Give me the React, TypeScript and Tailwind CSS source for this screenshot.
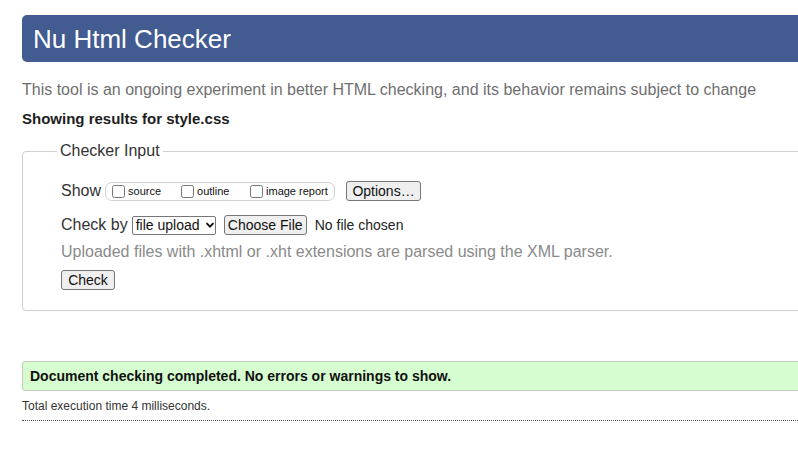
import React from "react";

const Chevron = () => (
  <svg width="10" height="10" viewBox="0 0 10 10" className="ml-[5px]">
    <path d="M1.5 3.2 L5 6.7 L8.5 3.2" fill="none" stroke="#111" strokeWidth="1.9" />
  </svg>
);

const Opt = ({ label }: { label: string }) => (
  <label className="flex items-center">
    <input type="checkbox" className="w-[13px] h-[13px] m-0" readOnly />
    <span className="text-[11px] ml-[3px] text-[#111]">{label}</span>
  </label>
);

const Btn = ({ children, className = "" }: { children: React.ReactNode; className?: string }) => (
  <button
    className={
      "h-[20px] bg-[#efefef] border border-[#767676] rounded-[3px] text-[14px] text-[#111] leading-[18px] " +
      className
    }
  >
    {children}
  </button>
);

export default function App() {
  return (
    <div
      className="w-[798px] h-[463px] overflow-hidden bg-white text-[#222]"
      style={{ fontFamily: '"Liberation Sans", Arial, sans-serif' }}
    >
      <div className="w-[860px] pl-[22px] pt-[15px]">
        <div className="h-[47px] bg-[#425b91] rounded-[5px] pl-[11px] flex items-center">
          <h1 className="text-white text-[26px] leading-none">Nu Html Checker</h1>
        </div>

        <p className="mt-[19px] text-[16px] leading-[18px] text-[#6f6f6f]">
          This tool is an ongoing experiment in better HTML checking, and its behavior remains subject to change
        </p>
        <p className="mt-[11px] text-[15px] leading-[18px] font-bold text-[#1d1d1d]">Showing results for style.css</p>

        <fieldset className="mt-[14px] border border-[#cfcfcf] rounded-[4px] pb-[20px]">
          <legend className="ml-[34px] px-[3px] text-[16px] leading-[18px] text-[#333]">Checker Input</legend>

          <div className="pl-[38px]">
            <div className="mt-[21px] flex items-center h-[20px]">
              <span className="text-[16px] text-[#333]">Show</span>
              <div className="ml-[4px] h-[19px] w-[230px] border border-[#d0d0d0] rounded-[7px] flex items-center pl-[6px]">
                <div className="w-[69px]">
                  <Opt label="source" />
                </div>
                <div className="w-[69px]">
                  <Opt label="outline" />
                </div>
                <Opt label="image report" />
              </div>
              <Btn className="ml-[11px] w-[75px]">Options…</Btn>
            </div>

            <div className="mt-[14px] flex items-center h-[20px]">
              <span className="text-[16px] text-[#333]">Check by</span>
              <div className="ml-[4px] h-[19px] w-[84px] border border-[#767676] rounded-[2px] flex items-center pl-[3px] text-[14px] text-[#111]">
                file upload
                <Chevron />
              </div>
              <Btn className="ml-[8px] w-[83px]">Choose File</Btn>
              <span className="ml-[8px] text-[14px] text-[#222]">No file chosen</span>
            </div>

            <p className="mt-[8px] text-[16px] leading-[18px] text-[#8a8a8a]">
              Uploaded files with .xhtml or .xht extensions are parsed using the XML parser.
            </p>

            <div className="mt-[9px] flex">
              <Btn className="w-[54px]">Check</Btn>
            </div>
          </div>
        </fieldset>

        <div className="mt-[50px] h-[30px] bg-[#d6fdd0] border border-[#c3cbbd] rounded-[3px] pl-[7px] flex items-center">
          <span className="text-[14px] font-bold text-[#111]">Document checking completed. No errors or warnings to show.</span>
        </div>

        <p className="mt-[6px] text-[12px] leading-[18px] text-[#333]">Total execution time 4 milliseconds.</p>
        <div className="mt-[5px] border-b border-dotted border-[#555]" />
      </div>
    </div>
  );
}
